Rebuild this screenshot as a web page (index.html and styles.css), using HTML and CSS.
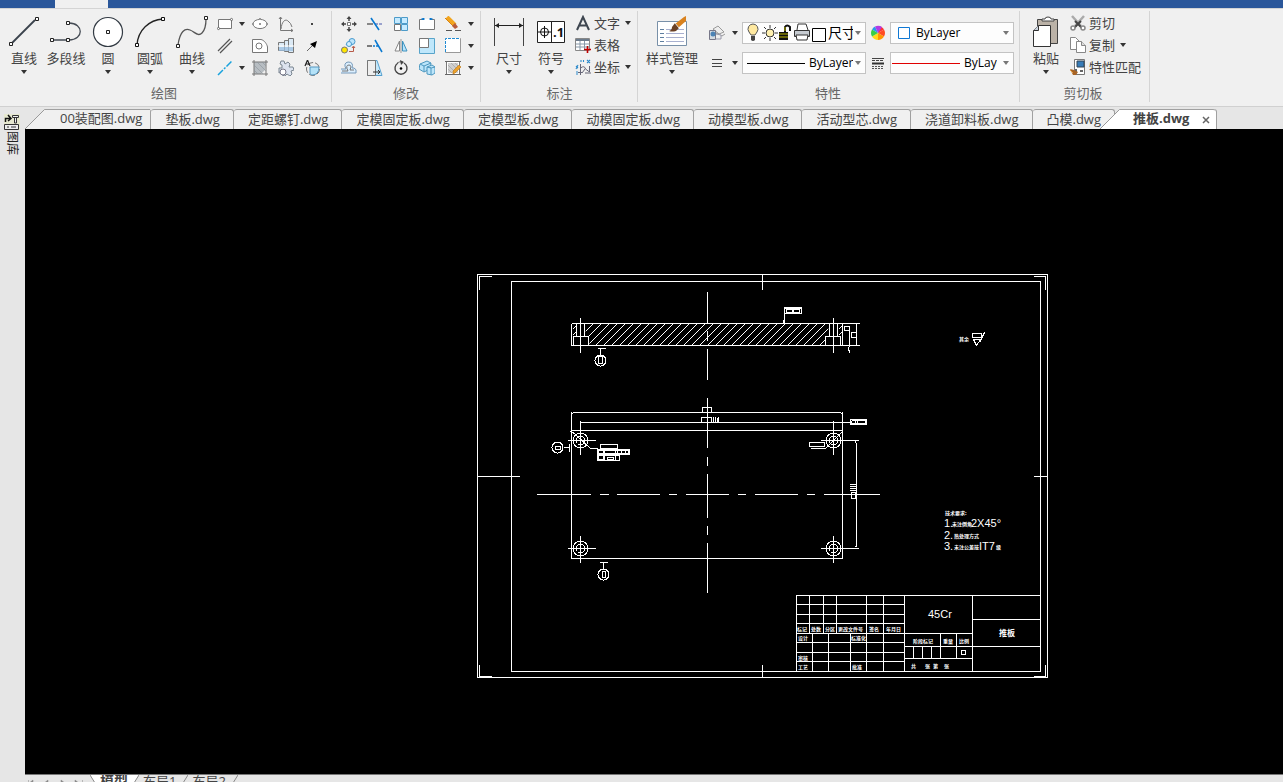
FILE: index.html
```html
<!DOCTYPE html>
<html lang="zh-CN">
<head>
<meta charset="utf-8">
<title>推板.dwg</title>
<link rel="stylesheet" href="styles.css">
</head>
<body>
<header class="titlebar"><div class="titlebar-tab"></div></header>

<div class="ribbon">
  <section class="group">
    <div class="tools">
      <div class="bigs">
        <button class="big"><svg viewBox="0 0 32 32"><path d="M4 27L27 4" stroke="#3a424c" stroke-width="1.8"/><g fill="#fff" stroke="#222"><path d="M1.500 26.500h3v3h-3zM27.500 1.500h3v3h-3z"/></g></svg><span>直线</span><i class="caret"></i></button>
        <button class="big"><svg viewBox="0 0 32 32"><path d="M2 24H19C34 24 34 7 19 7" fill="none" stroke="#444b54" stroke-width="1.300"/><g fill="#fff" stroke="#222"><path d="M.5 22.500h3v3h-3zM16.500 22.500h3v3h-3zM16.500 5.500h3v3h-3z"/></g></svg><span>多段线</span></button>
        <button class="big"><svg viewBox="0 0 32 32"><circle cx="16" cy="16" r="14.500" fill="#fff" stroke="#333b44" stroke-width="1.200"/><path d="M14.500 14.500h3v3h-3z" fill="#fff" stroke="#222"/></svg><span>圆</span><i class="caret"></i></button>
        <button class="big"><svg viewBox="0 0 32 32"><path d="M3 29C4 14 15 4 29 3" fill="none" stroke="#222" stroke-width="1.300"/><g fill="#fff" stroke="#111"><path d="M1.500 27.500h3v3h-3zM27.500 1.500h3v3h-3z"/></g></svg><span>圆弧</span><i class="caret"></i></button>
        <button class="big"><svg viewBox="0 0 32 32"><path d="M2 29C4 15 9 12 14 14S22 21 26 17Q30 13 30 3" fill="none" stroke="#555" stroke-width="1.300"/><g fill="#fff" stroke="#222"><path d="M.5 28.500h3v3h-3zM28.500.5h3v3h-3z"/></g></svg><span>曲线</span><i class="caret"></i></button>
      </div>
      <div class="smalls draw">
        <button aria-label="矩形"><svg viewBox="0 0 16 16"><path d="M1.500 3.500h13v9h-13z" fill="#fff" stroke="#777"/><g fill="#fff" stroke="#555" stroke-width=".8"><circle cx="1.500" cy="12.500" r="1.100"/><circle cx="14.500" cy="3.500" r="1.100"/></g></svg></button><i class="caret"></i>
        <button aria-label="椭圆"><svg viewBox="0 0 16 16"><ellipse cx="8" cy="8" rx="7" ry="4.600" fill="#fff" stroke="#777"/><path d="M7 2h2v2H7zM7 7h2v2H7zM0 7h2v2H0zM14 7h2v2h-2z" fill="#999"/></svg></button>
        <button aria-label="公式曲线"><svg viewBox="0 0 16 16"><path d="M2.500 1v13.500H15M1 3l1.500-2L4 3M13 13l2 1.500-2 1.500M3 13C4 4 8 3 10 5q3 2 4 6" fill="none" stroke="#777"/></svg></button>
        <button aria-label="点"><svg viewBox="0 0 16 16"><path d="M7 7h2v2H7z" fill="#444"/></svg></button>
        <button aria-label="双线"><svg viewBox="0 0 16 16"><path d="M1 13L13 1M3 15L15 3" stroke="#555" stroke-width="1.200"/></svg></button><i></i>
        <button aria-label="轮廓线"><svg viewBox="0 0 16 16"><path d="M.5 1.500H9C12 2 15 6 15.500 9v5.500H.5z" fill="#fff" stroke="#777"/><circle cx="7" cy="8" r="3" fill="none" stroke="#777"/></svg></button>
        <button aria-label="孔轴"><svg viewBox="0 0 16 16"><path d="M.5 4.500h6v8h-6zM6.500 2.500h4v11h-4zM10.500.5h5v14h-5z" fill="#dceaf5" stroke="#777"/><path d="M1 9h14v4H1z" fill="#9bbfe0" opacity=".75"/><path d="M0 8h16" stroke="#fff"/></svg></button>
        <button aria-label="箭头"><svg viewBox="0 0 16 16"><path d="M3 13L9 7" stroke="#666"/><path d="M13 3L11 10 6 6z"/></svg></button>
        <button aria-label="中心线"><svg viewBox="0 0 16 16"><path d="M1 15L15 1" stroke="#18a2dd" stroke-width="1.500" stroke-dasharray="7 1.500 2 1.500"/></svg></button><i class="caret"></i>
        <button aria-label="剖面线"><svg viewBox="0 0 16 16"><path d="M2 2h12l-1 8-4 4H2z" fill="#b7bdc2"/><path d="M2 0v16M14 0v16M0 2h16M0 14h16" stroke="#777"/><path d="M2 5l9 9M2 10l4 4M5 2l9 9M10 2l4 4" stroke="#8c949a" stroke-width=".6"/></svg></button>
        <button aria-label="齿轮"><svg viewBox="0 0 16 16"><path d="M3 1h3l1 3 3-2 2 2-1 3h4l1 3-3 1 1 3-2 2-3-2-2 2-3-1v-3L1 13V8h3V5L2 4z" fill="#dce3ef" stroke="#7b8792"/><circle cx="5" cy="12" r="3" fill="#fff" stroke="#778"/></svg></button>
        <button aria-label="局部放大"><svg viewBox="0 0 16 16"><circle cx="9" cy="9" r="6.500" fill="#eee" stroke="#777" stroke-dasharray="6 2"/><path d="M6 7h9q0 8-7 8-2 0-2-2z" fill="#b4e2f8" stroke="#5797c0"/><path d="M1 6L3.500 0 6 6M2 4h3" fill="none" stroke="#222" stroke-width="1.200"/></svg></button>
      </div>
    </div>
    <h2>绘图</h2>
  </section>

  <section class="group">
    <div class="tools">
      <div class="smalls modify">
        <button aria-label="移动"><svg viewBox="0 0 16 16"><path d="M8 1v4M8 11v4M1 8h4M11 8h4" stroke="#444" stroke-width="1.500"/><path d="M5.500 3L8 0l2.500 3zM5.500 13L8 16l2.500-3zM3 5.500L0 8l3 2.500zM13 5.500L16 8l-3 2.500z" fill="#444"/><path d="M6.500 6.500h3v3h-3z" fill="#fff" stroke="#777"/></svg></button>
        <button aria-label="修剪"><svg viewBox="0 0 16 16"><path d="M0 8h6" stroke="#666" stroke-width="1.500"/><path d="M8 8h8" stroke="#45a" stroke-dasharray="3 1"/><path d="M4 2l8 12" stroke="#0878d0" stroke-width="1.600"/></svg></button>
        <button aria-label="阵列"><svg viewBox="0 0 16 16"><path d="M1.500 1.500h6v6h-6zM8.500 1.500h6v6h-6zM8.500 8.500h6v6h-6z" fill="#c5eaff" stroke="#4d9bc9"/><path d="M1.500 8.500h6v6h-6z" fill="#fff" stroke="#777"/></svg></button>
        <button aria-label="打断"><svg viewBox="0 0 16 16"><path d="M4 3.500H.5v10h15v-10H12" fill="#fff" stroke="#777"/><path d="M4 3h8v7H4z" fill="#fff"/><path d="M2.500 3h3M10.500 3h3M4.500 2v2M11.500 2v2" stroke="#0878d0" stroke-width="1.500"/></svg></button>
        <button aria-label="删除"><svg viewBox="0 0 16 16"><path d="M2 1l8 8" stroke="#f2a51f" stroke-width="4"/><path d="M0 2l9 9" stroke="#d88211"/><path d="M10 7l3 4-3 2-3-3z" fill="#b85b3b"/><path d="M1 14.500h6M10 14.500h6" stroke="#555"/></svg></button><i class="caret"></i>
        <button aria-label="复制对象"><svg viewBox="0 0 16 16"><path d="M5 7L9 3M9 8l4-4" stroke="#75b7e8" stroke-width="1.500"/><circle cx="11" cy="3.500" r="3" fill="#bce4fb" stroke="#4a9bce"/><circle cx="8" cy="6" r="2.500" fill="#d4efff" stroke="#4a9bce"/><circle cx="3.500" cy="12" r="3" fill="#ffe500" stroke="#777"/><path d="M8 13.500h4.500V9M11 10l1.500-2L14 10" fill="none" stroke="#b75a48"/></svg></button>
        <button aria-label="延伸"><svg viewBox="0 0 16 16"><path d="M0 8h5" stroke="#555" stroke-width="1.500"/><path d="M6 8h6" stroke="#0878d0" stroke-width="1.500" stroke-dasharray="2 1"/><path d="M8 2l7 12" stroke="#0878d0" stroke-width="1.500"/></svg></button>
        <button aria-label="镜像"><svg viewBox="0 0 16 16"><path d="M6.500 3v10H2z" fill="#fff" stroke="#888"/><path d="M9.500 3v10H14z" fill="#b9e4fb" stroke="#3c91be"/><path d="M8 1v14" stroke="#999"/></svg></button>
        <button aria-label="缩放"><svg viewBox="0 0 16 16"><path d="M.5.5h15v15H.5z" fill="#bfe7fb" stroke="#58a4ca"/><path d="M.5.5h9v9h-9z" fill="#fff" stroke="#777"/></svg></button>
        <button aria-label="矩形边"><svg viewBox="0 0 16 16"><path d="M.5.5h15v14H.5z" fill="#fff" stroke="#999"/><path d="M.5 14V.5H15" fill="none" stroke="#fff"/><path d="M.5 14V.5H15" fill="none" stroke="#208bd3" stroke-dasharray="3 1"/></svg></button><i class="caret"></i>
        <button aria-label="偏移"><svg viewBox="0 0 16 16"><path d="M0 9h5Q2 3 7 2q6 0 4 6h2q3 1 2 5H0" fill="#dbefff" stroke="#7699b9"/><path d="M1 11h6Q4 5 8 5q3 0 1 5h4" fill="none" stroke="#777"/></svg></button>
        <button aria-label="拉伸"><svg viewBox="0 0 16 16"><path d="M.5.5H10l5 15H.5z" fill="#c6e8fa" stroke="#56a1d0"/><path d="M.5.5h8v15h-8z" fill="#eee" stroke="#777"/><path d="M6 12h7M11 10l2 2-2 2" fill="none" stroke="#333"/></svg></button>
        <button aria-label="旋转"><svg viewBox="0 0 16 16"><path d="M5 3A6 6 0 1 0 11 3" fill="none" stroke="#444" stroke-width="1.400"/><path d="M4 3q3-2 6-1" fill="none" stroke="#777"/><path d="M7 0l4 2-3 3z" fill="#444"/><circle cx="8" cy="8.500" r="1.300"/></svg></button>
        <button aria-label="三维块"><svg viewBox="0 0 16 16"><g fill="#bce5fa" stroke="#4c97bf"><path d="M1 4l7-3 4 2-1 6-6 3-5-3z"/><path d="M1 4l4 2v6M5 6l7-3M8 7l5-2 3 2v6l-3 2-5-1zM8 7l4 1 4-1M12 8v7"/></g></svg></button>
        <button aria-label="编辑填充"><svg viewBox="0 0 16 16"><path d="M1.500 1.500h13v13h-13z" fill="#fff" stroke="#777"/><path d="M3 3h10v10H3z" fill="#cfcfcf"/><path d="M3 5l8 8M3 9l4 4M6 3l7 7M10 3l3 3" stroke="#999" stroke-width=".6"/><path d="M0 1.500h16M0 14.500h16" stroke="#666"/><path d="M8 11l6-6 2 2-6 6-2 1z" fill="#eca22b" stroke="#b87416" stroke-width=".6"/></svg></button><i class="caret"></i>
      </div>
    </div>
    <h2>修改</h2>
  </section>

  <section class="group annotate">
    <div class="tools">
      <div class="bigs">
        <button class="big"><svg viewBox="0 0 32 32"><path d="M1.500 2v28M30.500 2v28" stroke="#444"/><path d="M2 9.500h28" stroke="#222"/><path d="M2 9.500L6 7v5zM30 9.500L26 7v5z" fill="#222"/></svg><span>尺寸</span><i class="caret"></i></button>
        <button class="big"><svg viewBox="0 0 32 32"><path d="M2.500 5.500h27v21h-27zM16.500 5v21" fill="#fff" stroke="#222"/><circle cx="9.500" cy="16" r="4" fill="none" stroke="#111"/><path d="M3 16h13M9.500 10v12" stroke="#111"/><text x="18" y="21" class="icon-num">.1</text></svg><span>符号</span><i class="caret"></i></button>
      </div>
      <div class="rows">
        <button><svg viewBox="0 0 16 16"><path d="M2 15L8 2l6 13M4.500 10.500h7" fill="none" stroke="#3e4650" stroke-width="2"/></svg><span>文字</span><i class="caret"></i></button>
        <button><svg viewBox="0 0 16 16"><path d="M.5 1.500h14v12H.5z" fill="#fff" stroke="#888"/><path d="M1 2h13v2H1z" fill="#6d7c8c"/><path d="M1 7h13M1 10h13M5 4v9M9.500 4v9" stroke="#8798a8"/><path d="M12.500 9v7M9 12.500h7" stroke="#c00000" stroke-width="1.600"/></svg><span>表格</span></button>
        <button><svg viewBox="0 0 16 16"><path d="M5.500 5v11M3 13.500h4M5.500 9q4-3 5 1l4 3V7M10 14h6M7 14l3-4" fill="none" stroke="#667"/><path d="M6 1v2M8.500 1v2M12 1l3 3M15 1l-3 3M1 7l2 2M3 6l-2 4M1 13h2M1 15h2" stroke="#2d8acb" stroke-width="1.100"/></svg><span>坐标</span><i class="caret"></i></button>
      </div>
    </div>
    <h2>标注</h2>
  </section>

  <section class="group props">
    <div class="tools">
      <button class="big wide"><svg viewBox="0 0 32 32"><path d="M1.500 5.500h29v24h-29z" fill="#fff" stroke="#7890a8"/><path d="M4 13.500h4M4 17.500h4M4 21.500h4M4 25.500h4" stroke="#5f7f9f"/><path d="M10 13.500h18M10 17.500h18M10 21.500h18M10 25.500h18" stroke="#a8b0cf"/><path d="M28 1l2-1v5l-8 7-3-4z" fill="#d9821f"/><path d="M19 7l4 5-3 3q-4 1-7 0 3-1 3-4z" fill="#6a4024"/><path d="M19 7l4 5" stroke="#ddd"/></svg><span>样式管理</span><i class="caret"></i></button>
      <div class="prop-grid">
        <button aria-label="图层"><svg viewBox="0 0 16 16"><path d="M4 4l5-3 6 6-5 2zM5 7l8 4 3-2" fill="#eee" stroke="#999"/><path d="M.5 5.500h6v9h-6z" fill="#d5dbe1" stroke="#778"/><circle cx="4" cy="9" r="2.500" fill="#4c83b5"/><path d="M7 9l5 1v4H7" fill="#eee" stroke="#99a"/></svg></button><i class="caret"></i>
        <div class="combo">
          <svg class="layer-icons" viewBox="0 0 80 20"><path d="M10 1a5 5 0 0 0-4 8l2 3h4l2-3a5 5 0 0 0-4-8z" fill="#ffe9a0" stroke="#555"/><path d="M8 13h4v4q-2 2-4 0z" fill="#444"/><circle cx="27" cy="10" r="4" fill="#fff1b0" stroke="#333"/><path d="M27 2v3M27 15v3M19 10h3M32 10h3M21 4l2 2M31 14l2 2M33 4l-2 2M21 16l2-2" stroke="#333"/><path d="M36 9h9v8h-9z" fill="#111"/><path d="M36 11h9M36 14h9" stroke="#bdb800"/><path d="M42 9V4q2-3 5 0v4" fill="none" stroke="#111" stroke-width="2"/><path d="M42 8V4" stroke="#c4bd00"/><path d="M54 7l1-6h8l2 6" fill="#fff" stroke="#333"/><path d="M51.500 7.500h15v6h-15z" fill="#c6cbd1" stroke="#333"/><path d="M53 12h12l-1 5H54z" fill="#fff" stroke="#333"/><path d="M69.500 5.500h13v13h-13z" fill="#fff" stroke="#000"/></svg>
          <select class="layer-name" aria-label="图层名"><option>尺寸线</option></select><i class="caret"></i>
        </div>
        <svg class="wheel" viewBox="0 0 16 16"><path d="M8 8V1a7 7 0 0 1 6 3.500z" fill="#f33"/><path d="M8 8l6-3.500a7 7 0 0 1 0 7z" fill="#ff4b22"/><path d="M8 8l6 3.500A7 7 0 0 1 8 15z" fill="#ff9500"/><path d="M8 8v7a7 7 0 0 1-6-3.500z" fill="#ffd91a"/><path d="M8 8l-6 3.500a7 7 0 0 1 0-7z" fill="#38ce45"/><path d="M8 8L2 4.500A7 7 0 0 1 5 1.500z" fill="#2997e8"/><path d="M8 8L5 1.500A7 7 0 0 1 12 2z" fill="#b13be5"/></svg>
        <div class="combo"><svg class="colour-box" viewBox="0 0 12 12"><path d="M.5.5h11v11H.5z" fill="#fff" stroke="#0f78d4"/></svg><select aria-label="颜色"><option>ByLayer</option></select><i class="caret"></i></div>
        <button aria-label="线宽"><svg viewBox="0 0 16 16"><path d="M3 4.500h10M3 8.500h10M3 11.500h10" stroke="#444"/></svg></button><i class="caret"></i>
        <div class="combo"><hr class="line black"><select class="short" aria-label="线型"><option>ByLayer</option></select><i class="caret"></i></div>
        <svg class="wheel" viewBox="0 0 16 16"><path d="M2 3.500h12" stroke="#444"/><path d="M2 5.500h12" stroke="#444" stroke-dasharray="3 1"/><path d="M2 8.500h12" stroke="#333" stroke-width="2"/><path d="M2 11.500h12M2 13.500h12" stroke="#555" stroke-dasharray="2 1"/></svg>
        <div class="combo"><hr class="line red"><select class="tight" aria-label="线宽样式"><option>ByLayer</option></select><i class="caret"></i></div>
      </div>
    </div>
    <h2>特性</h2>
  </section>

  <section class="group clip">
    <div class="tools">
      <button class="big"><svg viewBox="0 0 32 32"><path d="M7.500 3.500h20v24h-20z" fill="#bbb2a7" stroke="#444"/><path d="M12 5V3h3q0-2 3-2t3 2h3v2z" fill="#fff" stroke="#444"/><path d="M3.500 14.500l5-5h12v21h-17z" fill="#fff" stroke="#333"/><path d="M3.500 14.500h5v-5" fill="#ccd4df" stroke="#333"/></svg><span>粘贴</span><i class="caret"></i></button>
      <div class="rows">
        <button><svg viewBox="0 0 16 16"><path d="M2 1l9 10M14 1L5 11" stroke="#aaa" stroke-width="2.500"/><path d="M5 6l7 7M11 6l-7 7" stroke="#444" stroke-width="2"/><g fill="#fff" stroke="#888" stroke-width="1.500"><circle cx="3" cy="13" r="2"/><circle cx="13" cy="13" r="2"/></g></svg><span>剪切</span></button>
        <button><svg viewBox="0 0 16 16"><path d="M.5.5h5l4 4v8h-9z" fill="#fff" stroke="#888"/><path d="M6.500 4.500h5l4 4v7h-9z" fill="#fff" stroke="#888"/><path d="M11.500 4.500v4h4" fill="#ddd" stroke="#888"/></svg><span>复制</span><i class="caret"></i></button>
        <button><svg viewBox="0 0 16 16"><path d="M4.500.5h10v15h-10z" fill="#fff" stroke="#777"/><path d="M7 2h7v6H7z" fill="#377cb8" stroke="#345"/><path d="M6 10v4M10 12h3" stroke="#333" stroke-width="1.500"/><path d="M0 10l4 1 4 2-2 3H3z" fill="#a86425"/><path d="M0 11l3 3" stroke="#e5a44e"/></svg><span>特性匹配</span></button>
      </div>
    </div>
    <h2>剪切板</h2>
  </section>
</div>

<div class="workspace">
  <aside class="side"><button class="side-tab"><svg viewBox="0 0 16 16"><path d="M0 0h16v16H0z" fill="#e6e8cf"/><path d="M1.500 8V4.500H6M4 1l3 3.500L4 7" fill="none" stroke="#111" stroke-width="1.500"/><path d="M8.500 1.500h6v2h-6zM10.500 4v5h2V4M.5 10.500h14v5H.5zM3 13h2M7 13h5" fill="#eee" stroke="#333"/></svg><span>图库</span></button></aside>
  <main class="main">
    <nav class="tabs">
      <button class="tab first"><svg class="slant" viewBox="0 0 20 20"><path d="M0 20L19.500 .5H20V20z" fill="#f0f0f0"/><path d="M0 20L19.500 .5H20" fill="none" stroke="#999"/></svg><span>00装配图.dwg</span></button>
      <button class="tab">垫板.dwg</button><button class="tab">定距螺钉.dwg</button><button class="tab">定模固定板.dwg</button><button class="tab">定模型板.dwg</button><button class="tab">动模固定板.dwg</button><button class="tab">动模型板.dwg</button><button class="tab">活动型芯.dwg</button><button class="tab">浇道卸料板.dwg</button><button class="tab">凸模.dwg</button>
      <button class="tab first active"><svg class="slant" viewBox="0 0 20 20"><path d="M0 20L19.500 .5H20V20z" fill="#fff"/><path d="M0 20L19.500 .5H20" fill="none" stroke="#999"/></svg><span>推板.dwg<svg class="close" viewBox="0 0 8 8"><path d="M1 1l6 6M7 1L1 7" stroke="#666" stroke-width="1.500"/></svg></span></button>
    </nav>

    <div class="canvas">
      <svg class="drawing" role="img" aria-label="推板零件图">
        <defs>
          <clipPath id="cut"><path d="M585 323H828V336H825V345H589V336H585z"/></clipPath>
          <g id="hole"><circle r="7.500"/><circle r="4.500"/><path d="M-13 0H15M0-13V14"/></g>
        </defs>
        <g transform="translate(-24.500 -128.500)" class="ink">
          <path d="M477 274H1047V677H477zM511 281H1040V671H511zM491 276H479V289M1033 276H1045V289M479 664V676H491M1033 676H1045V664M762 274V289M762 664V677M477 476H519M1033 476H1047"/>
          <path d="M707 291V323M707 330V340M707 348V379M707 397V447M707 456V465M707 473V517M707 525V534M707 542V592"/>
          <path d="M536 494H590M599 494H608M616 494H659M668 494H676M685 494H728M737 494H745M754 494H797M806 494H814M823 494H879"/>
          <path d="M571 323H859M571 345H859M571 323V345M842 323V345M856 323V345M849 325V346L848 347V350H849V352M580 317V352M576 323V336M584 323V336M573 345V336H588V345M833 317V352M829 323V336M837 323V336M825 345V336H840V345M572 335l3-3M572 329l3-3M838 329l4-4M838 335l4-4M844 326h5v4h-5zM851 332h5v5h-5z"/>
          <g clip-path="url(#cut)" id="hatch"></g>
          <path d="M784 323V307H801V313H784M783 319V323M784 308H801M786 309h6v3h-6zM793 309h6v3h-6z"/>
          <path d="M597 348H605M600 348V355M598 356h4v7h-4zM599 562H607M603 562V569M602 571h3v6h-3zM569 443V451M563 447H569M555 446h5v3h-5z"/>
          <circle cx="600" cy="360" r="5.500"/><circle cx="603" cy="574" r="5.500"/><circle cx="557" cy="447" r="5.500"/>
          <path d="M571 411V558H842V411M571 430H842M571 413L574 412H839L842 413M580 422H850M580 420V430M833 420V430M702 407h9v5h-9zM701 417h10v5h-10zM713 416V422M715 416V422M717 417V422M718 416V422"/>
          <use href="#hole" x="580" y="440"/><use href="#hole" x="833" y="440"/><use href="#hole" x="580" y="548"/><use href="#hole" x="833" y="548"/>
          <path d="M570 431L574 433 590 448H597M842 431L825 448H810M809 442H824V446H809zM846 440H858M846 548H858M855 441L856 444V545L855 547M849 484H855M849 486H855M849 488H855M849 490H855M851 492h4v6h-4z"/>
          <path d="M850 419h16v5h-16zM851 420h14M851 423h14M851 420v3M855 420v4M857 420v4M865 420v3M600 444H617V448H600zM597 449H629V454H597zM598 450H629M598 453H629M598 449V460M603 449V460M604 449V460M615 449V460M617 449V454M621 449V454M625 449V454M628 449V454M597 454V460H619V455H597M598 459H604M607 457h6v2h-6z"/>
          <path d="M972 333h9v4h-9zM973 339H980L976 345zM979 342L984 332"/>
          <path d="M796 671V595H1040M904 595V671M972 595V671M796 604H904M796 614H904M796 623H904M796 633H972M796 642H904M796 652H904M796 661H904M809 595V633M823 595V633M836 595V633M866 595V671M883 595V671M812 633V671M828 633V671M850 633V671M904 646H972M904 658H972M913 646V658M922 646V658M931 646V658M940 633V658M956 633V658M972 619H1040M972 646H1040M961 650h4v4h-4z"/>
        </g>
        <g transform="translate(-25 -129)" class="notes">
          <g class="tiny">
            <text x="959" y="341">其余</text><text x="945" y="515">技术要求:</text><text x="952" y="526">未注倒角</text><text x="954" y="538">热处理方式</text><text x="954" y="549">未注公差按</text><text x="996" y="549">级</text>
            <text x="797" y="631">标记</text><text x="811" y="631">处数</text><text x="825" y="631">分区</text><text x="838" y="631">更改文件号</text><text x="869" y="631">签名</text><text x="886" y="631">年月日</text>
            <text x="798" y="640">设计</text><text x="851" y="640">标准化</text><text x="798" y="660">审核</text><text x="798" y="669">工艺</text><text x="852" y="669">批准</text>
            <text x="913" y="643">阶段标记</text><text x="943" y="643">重量</text><text x="959" y="643">比例</text><text x="911" y="668">共</text><text x="925" y="668">张</text><text x="933" y="668">第</text><text x="944" y="668">张</text>
          </g>
          <g class="cad"><text x="944" y="527">1.</text><text x="971" y="527">2X45°</text><text x="944" y="539">2.</text><text x="944" y="550">3.</text><text x="979" y="550">IT7</text><text x="928" y="618">45Cr</text></g>
          <text class="part" x="999" y="636">推板</text>
        </g>
      </svg>
    </div>

    <footer class="layouts">
      <svg class="pager" viewBox="0 0 60 12"><path d="M3.500 5v6M8 5l-5 4 5 4zM23 5l-5 4 5 4zM36 5l5 4-5 4zM50 5l5 4-5 4zM57.500 5v6" fill="#888" stroke="#888" stroke-width=".5"/></svg>
      <svg class="edge" viewBox="0 0 5 8"><path d="M0 0l5 8V0z" fill="#fff"/><path d="M0 0l5 8" stroke="#888"/></svg>
      <button class="layout current">模型</button>
      <svg class="edge" viewBox="0 0 5 8"><path d="M0 8l5-8H0z" fill="#fff"/><path d="M0 8l5-8" stroke="#888"/></svg>
      <button class="layout">布局1</button>
      <svg class="edge" viewBox="0 0 5 8"><path d="M0 8l5-8" stroke="#888"/></svg>
      <button class="layout">布局2</button>
      <svg class="edge" viewBox="0 0 5 8"><path d="M0 8l5-8" stroke="#888"/></svg>
    </footer>
  </main>
</div>
<script src="hatch.js"></script>
</body>
</html>
```
FILE: hatch.js
```js
// Section hatching of the plate: parallel 45 degree lines between its two faces.
const hatch = document.getElementById('hatch');
let d = '';
for (let x = 571; x < 850; x += 8) d += `M${x} 345L${x + 22} 323`;
const path = document.createElementNS('http://www.w3.org/2000/svg', 'path');
path.setAttribute('d', d);
hatch.appendChild(path);
```
FILE: styles.css
```css
* { box-sizing: border-box; }
body {
  margin: 0;
  height: 100vh;
  display: flex;
  flex-direction: column;
  overflow: hidden;
  background: #e6e6e6;
  color: #444;
  font: 13px/20px "Open Sans", "Noto Sans CJK SC", sans-serif;
}
button {
  margin: 0;
  padding: 0;
  border: 0;
  background: none;
  color: inherit;
  font: inherit;
  white-space: nowrap;
}
svg { display: block; flex: none; }
.caret {
  flex: none;
  width: 6px;
  height: 4px;
  background: #333;
  clip-path: polygon(0 0, 100% 0, 50% 100%);
}

.titlebar { flex: none; height: 8px; padding-left: 55px; background: #2b579a; }
.titlebar-tab { width: 53px; height: 8px; background: #f0f0f0; }

.ribbon {
  flex: none;
  display: flex;
  padding: 2px 0 4px;
  border-top: 1px solid #d4d4d4;
  border-bottom: 1px solid #d0d0d0;
  background: #f0f0f0;
}
.group { flex: none; border-right: 1px solid #d4d4d4; padding: 0 4px; }
.group:first-child { padding: 0 6px 0 3px; }
.tools { display: flex; height: 73px; }
.group h2 {
  margin: 0;
  font-size: 13px;
  font-weight: 400;
  line-height: 18px;
  text-align: center;
  color: #666;
}
.bigs { display: flex; }
.big {
  width: 42px;
  padding-top: 5px;
  display: flex;
  flex-direction: column;
  align-items: center;
}
.big svg { width: 32px; height: 32px; }
.big .caret { margin-top: 2px; }
.wide { width: 60px; }
.icon-num { font: bold 13px "Open Sans", sans-serif; fill: #111; }

.smalls { display: grid; grid-auto-rows: 22px; align-items: center; justify-items: center; padding-top: 2px; }
.draw { grid-template-columns: 24px 10px 26px 26px 26px; }
.modify { grid-template-columns: repeat(5, 26px) 10px; }
.smalls svg, .rows svg, .prop-grid button svg { width: 16px; height: 16px; }

.rows { padding-top: 1px; }
.rows button { display: flex; align-items: center; gap: 3px; height: 22px; }
.rows .caret { margin-left: 2px; }
.annotate { padding: 0 6px 0 7px; }
.annotate .rows { padding-left: 3px; }
.clip { padding: 0 8px 0 5px; }
.clip .rows { padding-left: 3px; }

.props { padding: 0 5px 0 4px; }
.prop-grid {
  display: grid;
  grid-template-columns: 30px 10px 124px 24px 124px;
  grid-auto-rows: 22px;
  row-gap: 8px;
  align-items: center;
  padding-top: 11px;
}
.prop-grid button { justify-self: center; }
.wheel { width: 16px; height: 16px; justify-self: center; }
.combo {
  display: flex;
  align-items: center;
  height: 22px;
  padding: 0 4px;
  border: 1px solid #c3c3c3;
  background: #fdfdfd;
}
.combo select {
  appearance: none;
  flex: 1;
  min-width: 0;
  margin: 0;
  padding: 0;
  border: 0;
  background: none;
  color: #000;
  font: 12px/20px "Open Sans", "Noto Sans CJK SC", sans-serif;
  overflow: hidden;
  text-overflow: clip;
}
.combo .caret { margin-left: 2px; background: #777; }
.layer-icons { width: 80px; height: 20px; overflow: visible; margin-left: -4px; margin-right: 5px; }
.combo .layer-name { font-size: 14px; }
.colour-box { width: 12px; height: 12px; margin: 0 6px 0 3px; }
.line { flex: 1; height: 1px; margin: 0; border: 0; }
.black { background: #000; margin-right: 4px; }
.red { background: #e00000; margin: 0 4px 0 -3px; }
.combo .short { flex: none; width: 44px; }
.combo .tight { flex: none; width: 33px; margin-right: 4px; }

.workspace { flex: 1; display: flex; min-height: 0; }
.side { flex: none; width: 25px; padding-top: 7px; }
.side-tab { display: flex; flex-direction: column; align-items: center; gap: 1px; width: 24px; }
.side-tab svg { width: 16px; height: 16px; }
.side-tab span { writing-mode: vertical-rl; text-orientation: sideways; font-size: 12px; line-height: 16px; color: #222; }
.main { flex: 1; min-width: 0; display: flex; flex-direction: column; }

.tabs { flex: none; display: flex; padding-top: 2px; }
.tab {
  height: 20px;
  padding: 0 13px 0 14px;
  border-top: 1px solid #a0a0a0;
  border-right: 1px solid #a0a0a0;
  border-radius: 3px 3px 0 0;
  background: #f0f0f0;
  line-height: 17px;
}
.tab.first { display: flex; padding: 0; border-top: 0; background: none; }
.first .slant { width: 20px; height: 20px; }
.first span {
  flex: 1;
  height: 20px;
  padding: 0 8px 0 15px;
  border-top: 1px solid #a0a0a0;
  background: #f0f0f0;
}
.tab.active { position: relative; margin-left: -15px; font-weight: 700; }
.active span {
  display: flex;
  padding: 0 6px 0 13px;
  border-radius: 0 3px 0 0;
  background: #fff;
}
.close { width: 8px; height: 8px; align-self: center; margin-left: 13px; }

.canvas { flex: 1; min-height: 0; background: #000; }
.drawing { width: 100%; height: 100%; }
.ink { fill: none; stroke: #fff; stroke-width: 1; shape-rendering: crispEdges; }
.notes { fill: #fff; }
.tiny { font: bold 5px "Noto Sans CJK SC", sans-serif; }
.cad { font: 11px "Liberation Sans", sans-serif; }
.part { font: bold 8px "Noto Sans CJK SC", sans-serif; }

.layouts { flex: none; display: flex; height: 8px; overflow: hidden; border-top: 1px solid #777; }
.pager { width: 60px; height: 12px; margin-right: 5px; }
.edge { width: 5px; height: 8px; }
.layout { align-self: flex-start; height: 12px; padding: 0 7px 0 4px; line-height: 12px; }
.current { padding: 0 6px 0 5px; background: #fff; font-size: 14px; font-weight: 700; }
```
